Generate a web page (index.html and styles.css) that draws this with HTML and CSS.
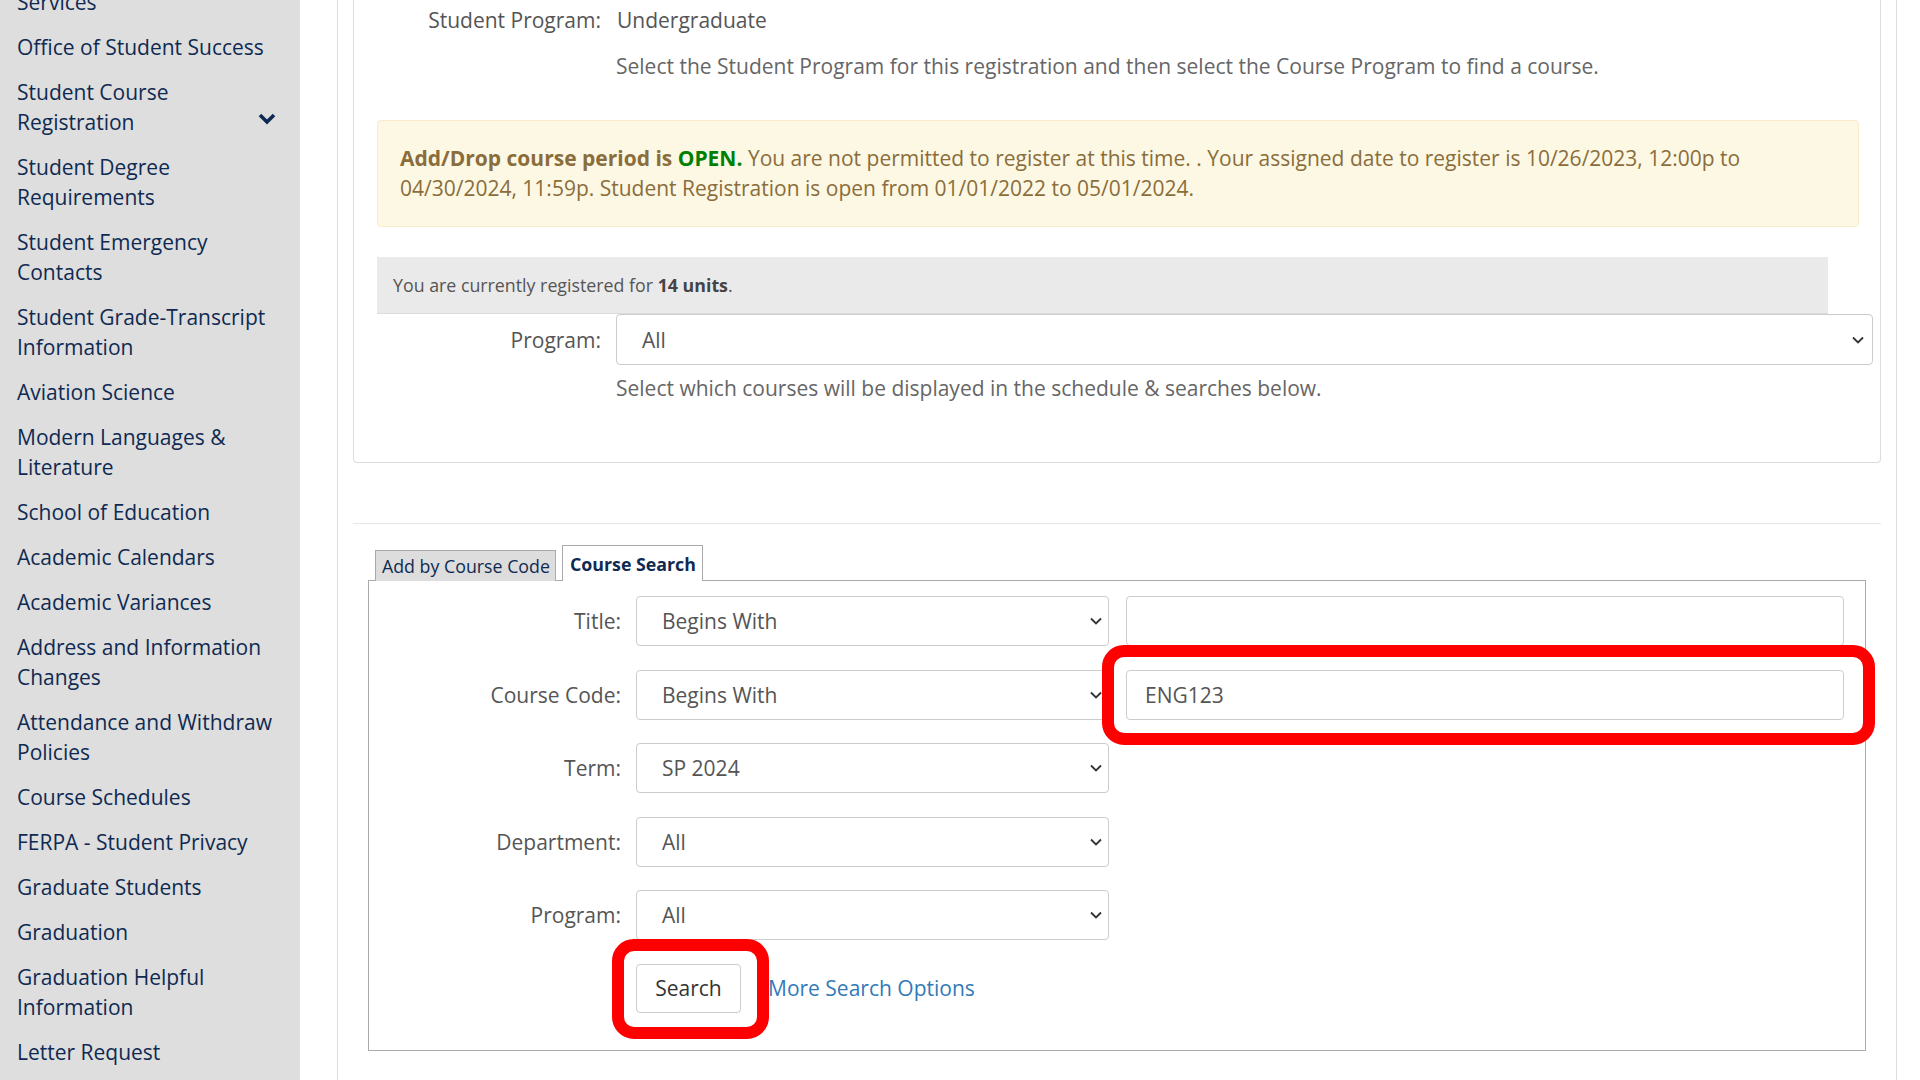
FILE: index.html
```html
<!DOCTYPE html>
<html lang="en">
<head>
<meta charset="utf-8">
<title>Student Course Registration</title>
<link rel="stylesheet" href="styles.css">
</head>
<body>
<aside class="sidebar">
  <ul class="nav">
    <li>Services</li>
    <li>Office of Student Success</li>
    <li class="has-sub"><span>Student Course Registration</span>
      <svg class="chev" width="18" height="12" viewBox="0 0 18 12"><polyline points="2,2 9,9 16,2" fill="none" stroke="#0f2a52" stroke-width="3.6"/></svg>
    </li>
    <li>Student Degree Requirements</li>
    <li>Student Emergency Contacts</li>
    <li>Student Grade-Transcript Information</li>
    <li>Aviation Science</li>
    <li>Modern Languages &amp; Literature</li>
    <li>School of Education</li>
    <li>Academic Calendars</li>
    <li>Academic Variances</li>
    <li>Address and Information Changes</li>
    <li>Attendance and Withdraw Policies</li>
    <li>Course Schedules</li>
    <li>FERPA - Student Privacy</li>
    <li>Graduate Students</li>
    <li>Graduation</li>
    <li>Graduation Helpful Information</li>
    <li>Letter Request</li>
  </ul>
</aside>
<main class="main">
  <div class="container">
    <section class="panel">
      <div class="prow">
        <div class="plabel">Student Program:</div>
        <div class="pvalue">Undergraduate</div>
      </div>
      <div class="prow help-row">
        <div></div>
        <div class="help">Select the Student Program for this registration and then select the Course Program to find a course.</div>
      </div>
      <div class="alert"><strong>Add/Drop course period is <span class="open">OPEN.</span></strong> You are not permitted to register at this time. . Your assigned date to register is 10/26/2023, 12:00p to 04/30/2024, 11:59p. Student Registration is open from 01/01/2022 to 05/01/2024.</div>
      <div class="units">You are currently registered for <b>14 units</b>.</div>
      <div class="prow select-row">
        <div class="plabel">Program:</div>
        <div class="select wide"><span>All</span>
          <svg width="12" height="8" viewBox="0 0 12 8"><polyline points="1,1.5 6,6.5 11,1.5" fill="none" stroke="#333" stroke-width="1.8"/></svg>
        </div>
      </div>
      <div class="prow help-row2">
        <div></div>
        <div class="help">Select which courses will be displayed in the schedule &amp; searches below.</div>
      </div>
    </section>
    <div class="divider"></div>
    <section class="search-wrap">
      <div class="tabs">
        <div class="tab">Add by Course Code</div>
        <div class="tab active">Course Search</div>
      </div>
      <div class="search-box">
        <div class="frow">
          <label class="flabel">Title:</label>
          <div class="select"><span>Begins With</span><svg width="12" height="8" viewBox="0 0 12 8"><polyline points="1,1.5 6,6.5 11,1.5" fill="none" stroke="#333" stroke-width="1.8"/></svg></div>
          <div class="input"></div>
        </div>
        <div class="frow">
          <label class="flabel">Course Code:</label>
          <div class="select"><span>Begins With</span><svg width="12" height="8" viewBox="0 0 12 8"><polyline points="1,1.5 6,6.5 11,1.5" fill="none" stroke="#333" stroke-width="1.8"/></svg></div>
          <div class="input">ENG123</div>
        </div>
        <div class="frow">
          <label class="flabel">Term:</label>
          <div class="select"><span>SP 2024</span><svg width="12" height="8" viewBox="0 0 12 8"><polyline points="1,1.5 6,6.5 11,1.5" fill="none" stroke="#333" stroke-width="1.8"/></svg></div>
        </div>
        <div class="frow">
          <label class="flabel">Department:</label>
          <div class="select"><span>All</span><svg width="12" height="8" viewBox="0 0 12 8"><polyline points="1,1.5 6,6.5 11,1.5" fill="none" stroke="#333" stroke-width="1.8"/></svg></div>
        </div>
        <div class="frow">
          <label class="flabel">Program:</label>
          <div class="select"><span>All</span><svg width="12" height="8" viewBox="0 0 12 8"><polyline points="1,1.5 6,6.5 11,1.5" fill="none" stroke="#333" stroke-width="1.8"/></svg></div>
        </div>
        <div class="brow">
          <button class="btn" type="button">Search</button>
          <a class="more" href="#">More Search Options</a>
        </div>
        <div class="mark mark-code"></div>
        <div class="mark mark-search"></div>
      </div>
    </section>
  </div>
</main>
</body>
</html>
```
FILE: styles.css
```css
* { box-sizing: border-box; }
html, body { margin: 0; height: 1080px; overflow: hidden; }
body {
  font-family: "Open Sans", "Liberation Sans", sans-serif;
  font-size: 21px;
  line-height: 30px;
  color: #555;
  background: #fff;
  display: flex;
}

/* Sidebar */
.sidebar { width: 300px; flex: none; height: 1080px; background: #dedede; overflow: hidden; }
.nav { list-style: none; margin: -21px 0 0; padding: 0; }
.nav li { padding: 7.5px 13px 7.5px 17px; color: #0f2a52; display: flex; align-items: center; }
.nav .chev { flex: none; margin-left: auto; margin-right: 11px; margin-top: 25px; }

/* Main */
.main { flex: 1; padding: 0 23px 0 37px; }
.container { height: 1080px; border-left: 1px solid #ddd; border-right: 1px solid #ddd; padding: 0 15px; }

.panel { border: 1px solid #ddd; border-top: none; border-radius: 0 0 4px 4px; padding: 5px 21px 59px 23px; }
.prow { display: grid; grid-template-columns: 224px 1fr; column-gap: 15px; align-items: center; }
.plabel { text-align: right; color: #555; }
.pvalue { color: #555; padding-left: 1px; }
.help { color: #666; }
.help-row { margin-top: 16px; }
.help-row2 { margin-top: 8px; }

.alert {
  margin-top: 39px;
  background: #fcf8e3;
  border: 1px solid #faebcc;
  border-radius: 4px;
  color: #8a6d3b;
  padding: 22px 22px 23px;
}
.alert strong { font-weight: 700; }
.alert .open { color: #008000; }

.units {
  margin-top: 30px;
  margin-right: 31px;
  background: #eaeaea;
  border-bottom: 1px solid #dcdcdc;
  font-size: 17.8px;
  line-height: 30px;
  padding: 13px 16px 13px;
  color: #555;
}
.units b { color: #444; }

.select {
  height: 50px;
  border: 1px solid #ccc;
  border-radius: 4px;
  background: #fff;
  display: flex;
  align-items: center;
  justify-content: space-between;
  padding: 0 6px 0 25px;
  color: #555;
}
.select.wide { height: 51px; margin-right: -14px; padding-right: 8px; }

.divider { margin-top: 60px; border-top: 1px solid #e6e6e6; }

/* Search */
.search-wrap { padding: 0 15px; margin-top: 21px; }
.tabs { display: flex; align-items: flex-end; gap: 6px; padding-left: 7px; margin-bottom: -1px; position: relative; z-index: 1; }
.tab {
  border: 1px solid #aaa;
  border-bottom: none;
  background: #ddd;
  color: #0f2a52;
  font-size: 17.8px;
  height: 31px;
  line-height: 30px;
  padding: 0 5px 0 6px;
}
.tab.active { background: #fff; font-weight: 700; height: 36px; line-height: 34px; padding: 1px 6px 0 7px; }

.search-box { position: relative; border: 1px solid #aaa; padding: 15px 21px 37px 0; }
.frow { display: flex; align-items: center; height: 50px; margin-bottom: 23.5px; }
.flabel { width: 252px; flex: none; text-align: right; color: #555; }
.frow .select { width: 473px; flex: none; margin-left: 15px; }
.input {
  flex: 1;
  margin-left: 17px;
  height: 50px;
  border: 1px solid #ccc;
  border-radius: 4px;
  padding-left: 18px;
  display: flex;
  align-items: center;
  color: #555;
}
.brow { display: flex; align-items: center; height: 49px; }
.btn {
  margin-left: 267px;
  width: 105px;
  height: 49px;
  border: 1px solid #ccc;
  border-radius: 4px;
  background: #fff;
  font: inherit;
  color: #333;
  padding: 0;
}
.more { margin-left: 27px; color: #337ab7; text-decoration: none; }

.mark { position: absolute; border: 12px solid #ff0000; border-radius: 22px; pointer-events: none; }
.mark-code { left: 733px; top: 64px; width: 773px; height: 100px; }
.mark-search { left: 243px; top: 358px; width: 157px; height: 100px; }
```
